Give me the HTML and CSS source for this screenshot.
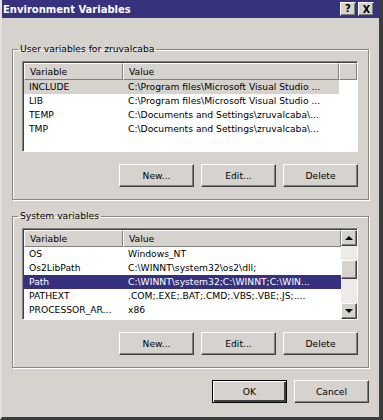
FILE: index.html
```html
<!DOCTYPE html>
<html lang="en">
<head>
  <meta charset="UTF-8">
  <title>Environment Variables</title>
  <link rel="stylesheet" href="styles.css">
</head>
<body>
  <div class="window">
    <div class="titlebar">
      <span class="title">Environment Variables</span>
      <div class="caption-buttons">
        <span class="cap-btn">?</span>
        <span class="cap-btn">
          <svg width="9" height="8" viewBox="0 0 9 8"><path d="M1 0h2l1.5 2.5L6 0h2L5.5 4 8 8H6L4.5 5.5 3 8H1l2.5-4z" fill="#000"/></svg>
        </span>
      </div>
    </div>

    <div class="content">
      <fieldset class="group">
        <legend>User variables for zruvalcaba</legend>
        <div class="list user-list">
          <div class="list-header">
            <span class="col-var">Variable</span>
            <span class="col-val">Value</span>
            <span class="col-rest"></span>
          </div>
          <div class="row inactive">
            <span class="col-var">INCLUDE</span>
            <span class="col-val">C:\Program files\Microsoft Visual Studio ...</span>
          </div>
          <div class="row">
            <span class="col-var">LIB</span>
            <span class="col-val">C:\Program files\Microsoft Visual Studio ...</span>
          </div>
          <div class="row">
            <span class="col-var">TEMP</span>
            <span class="col-val">C:\Documents and Settings\zruvalcaba\...</span>
          </div>
          <div class="row">
            <span class="col-var">TMP</span>
            <span class="col-val">C:\Documents and Settings\zruvalcaba\...</span>
          </div>
        </div>
        <div class="button-row">
          <button class="btn">New...</button>
          <button class="btn">Edit...</button>
          <button class="btn">Delete</button>
        </div>
      </fieldset>

      <fieldset class="group system-group">
        <legend>System variables</legend>
        <div class="list system-list">
          <div class="list-body">
            <div class="list-header">
              <span class="col-var">Variable</span>
              <span class="col-val">Value</span>
            </div>
            <div class="row">
              <span class="col-var">OS</span>
              <span class="col-val">Windows_NT</span>
            </div>
            <div class="row">
              <span class="col-var">Os2LibPath</span>
              <span class="col-val">C:\WINNT\system32\os2\dll;</span>
            </div>
            <div class="row selected">
              <span class="col-var">Path</span>
              <span class="col-val">C:\WINNT\system32;C:\WINNT;C:\WIN...</span>
            </div>
            <div class="row">
              <span class="col-var">PATHEXT</span>
              <span class="col-val">.COM;.EXE;.BAT;.CMD;.VBS;.VBE;.JS;....</span>
            </div>
            <div class="row">
              <span class="col-var">PROCESSOR_AR...</span>
              <span class="col-val">x86</span>
            </div>
          </div>
          <div class="scrollbar">
            <span class="sb-btn"><span class="arrow-up"></span></span>
            <div class="sb-track">
              <span class="sb-thumb"></span>
            </div>
            <span class="sb-btn"><span class="arrow-down"></span></span>
          </div>
        </div>
        <div class="button-row">
          <button class="btn">New...</button>
          <button class="btn">Edit...</button>
          <button class="btn">Delete</button>
        </div>
      </fieldset>

      <div class="dialog-buttons">
        <button class="btn default">OK</button>
        <button class="btn">Cancel</button>
      </div>
    </div>
  </div>
</body>
</html>
```

FILE: styles.css
```css
body {
  margin: 0;
  background: #d6d3ce;
  font-family: "DejaVu Sans", Verdana, sans-serif;
  font-size: 9.2px;
  color: #000;
}

.window {
  width: 383px;
  height: 420px;
  box-sizing: border-box;
  background: #d6d3ce;
  border-left: 2px solid #e4e1dc;
  border-right: 4px solid #3c3c3c;
  border-bottom: 3px solid #3c3c3c;
  overflow: hidden;
}

.titlebar {
  height: 18px;
  margin-left: -2px;
  background: #36327e;
  display: flex;
  align-items: center;
  justify-content: space-between;
  padding: 0 5px 0 3px;
}

.title {
  color: #fff;
  font-weight: bold;
  font-size: 10px;
}

.caption-buttons {
  display: flex;
  gap: 2px;
}

.cap-btn {
  width: 16px;
  height: 14px;
  box-sizing: border-box;
  background: #d6d3ce;
  border: 1px solid;
  border-color: #fff #404040 #404040 #fff;
  box-shadow: inset -1px -1px #808080;
  display: flex;
  align-items: center;
  justify-content: center;
  font-weight: bold;
  font-size: 10px;
  line-height: 1;
}

.content {
  padding: 0 10px 0 10px;
}

.group {
  margin: 25px 0 0;
  padding: 6px 10px 12px 9px;
  border: 1px solid #8a8884;
  box-shadow: inset 1px 1px #fff, 1px 1px #fff;
}

.group legend {
  padding: 0 2px;
  margin-left: -4px;
  line-height: 12px;
}

.system-group {
  margin-top: 10px;
}

.list {
  height: 91px;
  box-sizing: border-box;
  background: #fff;
  border: 1px solid;
  border-color: #808080 #fff #fff #808080;
  box-shadow: inset 1px 1px #404040;
  padding: 1px 0 0 1px;
  overflow: hidden;
}

.system-list {
  height: 92px;
  display: flex;
}

.list-body {
  flex: 1;
}

.list-header {
  display: flex;
  height: 17px;
}

.list-header span {
  box-sizing: border-box;
  background: #d6d3ce;
  border: 1px solid;
  border-color: #fff #808080 #808080 #fff;
  padding: 0 0 0 5px;
  line-height: 15px;
}

.col-var {
  width: 99px;
  flex: none;
  box-sizing: border-box;
  padding-left: 5px;
  white-space: nowrap;
  overflow: hidden;
}

.col-val {
  width: 216px;
  flex: none;
  box-sizing: border-box;
  padding-left: 5px;
  white-space: nowrap;
  overflow: hidden;
}

.list-header .col-rest {
  flex: 1;
}

.system-list .col-val {
  flex: 1;
}

.row {
  display: flex;
  height: 14px;
  line-height: 14px;
  width: 315px;
}

.row.inactive {
  background: #d6d3ce;
}

.row.selected {
  width: auto;
  background: #35317e;
  color: #fff;
}

.scrollbar {
  width: 16px;
  display: flex;
  flex-direction: column;
}

.sb-btn {
  height: 16px;
  box-sizing: border-box;
  background: #d6d3ce;
  border: 1px solid;
  border-color: #fff #404040 #404040 #fff;
  box-shadow: inset -1px -1px #808080;
  display: flex;
  align-items: center;
  justify-content: center;
}

.arrow-up,
.arrow-down {
  width: 0;
  height: 0;
  border-left: 4px solid transparent;
  border-right: 4px solid transparent;
}

.arrow-up {
  border-bottom: 4px solid #000;
}

.arrow-down {
  border-top: 4px solid #000;
}

.sb-track {
  flex: 1;
  background: #edebe7;
  padding-top: 14px;
}

.sb-thumb {
  display: block;
  height: 19px;
  box-sizing: border-box;
  background: #d6d3ce;
  border: 1px solid;
  border-color: #fff #404040 #404040 #fff;
  box-shadow: inset -1px -1px #808080;
}

.button-row {
  display: flex;
  justify-content: flex-end;
  gap: 7px;
  margin-top: 12px;
}

.btn {
  width: 75px;
  height: 23px;
  box-sizing: border-box;
  background: #d6d3ce;
  border: 1px solid;
  border-color: #fff #404040 #404040 #fff;
  box-shadow: inset -1px -1px #808080;
  font-family: "DejaVu Sans", Verdana, sans-serif;
  font-size: 9.2px;
  color: #000;
  padding: 0;
}

.btn.default {
  border: 1px solid #000;
  box-shadow: inset 1px 1px #fff, inset -2px -2px #404040, inset -1px -1px #808080;
}

.dialog-buttons {
  display: flex;
  justify-content: flex-end;
  gap: 7px;
  margin-top: 12px;
}
```
